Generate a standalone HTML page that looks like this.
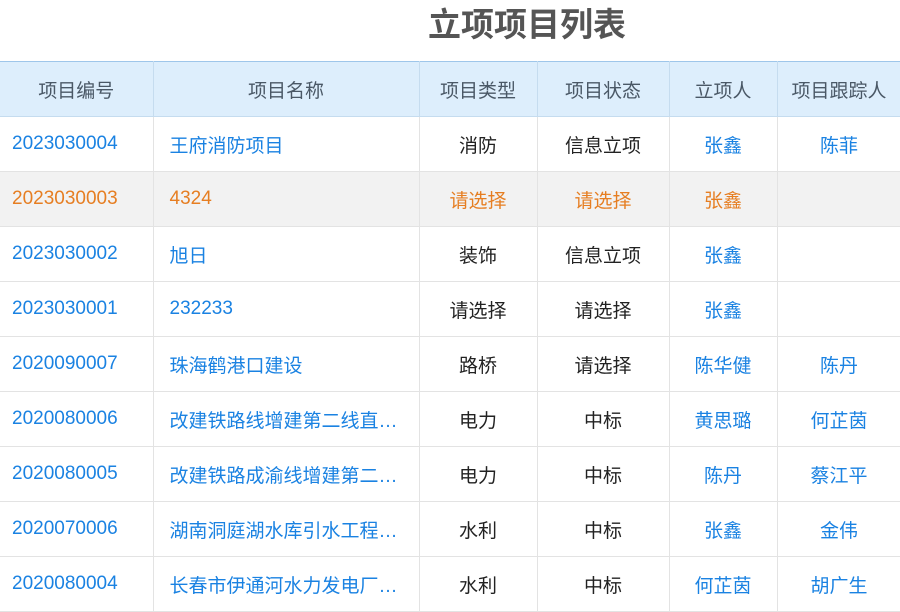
<!DOCTYPE html><html><head><meta charset="utf-8"><style>
body{margin:0;width:900px;height:600px;overflow:hidden;background:#fff;font-family:"Liberation Sans","Noto Sans CJK SC",sans-serif;}
h1{margin:0;height:61px;line-height:50px;text-align:center;font-size:33px;color:#555;font-weight:bold;padding-left:154px;box-sizing:border-box;}
table{border-collapse:collapse;table-layout:fixed;width:901px;font-size:19px;}
th,td{height:54px;border:1px solid #e3e3e3;text-align:center;white-space:nowrap;overflow:hidden;text-overflow:ellipsis;padding:0 6px;}
th{background:#ddeefc;color:#4a5866;font-weight:normal;border-color:#c5dcef;border-top:1px solid #9ec6ea;}
td{color:#222;}
td.l{text-align:left;padding-left:12px;}
td.l2{text-align:left;padding-left:16px;}
.b{color:#1a82e2;}
tr.o td{color:#e67e22;background:#f2f2f2;}
th:first-child,td:first-child{border-left:none;}
</style></head><body>
<h1>立项项目列表</h1>
<table>
<colgroup><col style="width:153px"><col style="width:266px"><col style="width:118px"><col style="width:132px"><col style="width:108px"><col style="width:124px"></colgroup>
<tr><th>项目编号</th><th>项目名称</th><th>项目类型</th><th>项目状态</th><th>立项人</th><th>项目跟踪人</th></tr>
<tr><td class="l b">2023030004</td><td class="l2 b">王府消防项目</td><td>消防</td><td>信息立项</td><td class="b">张鑫</td><td class="b">陈菲</td></tr>
<tr class="o"><td class="l">2023030003</td><td class="l2">4324</td><td>请选择</td><td>请选择</td><td>张鑫</td><td></td></tr>
<tr><td class="l b">2023030002</td><td class="l2 b">旭日</td><td>装饰</td><td>信息立项</td><td class="b">张鑫</td><td></td></tr>
<tr><td class="l b">2023030001</td><td class="l2 b">232233</td><td>请选择</td><td>请选择</td><td class="b">张鑫</td><td></td></tr>
<tr><td class="l b">2020090007</td><td class="l2 b">珠海鹤港口建设</td><td>路桥</td><td>请选择</td><td class="b">陈华健</td><td class="b">陈丹</td></tr>
<tr><td class="l b">2020080006</td><td class="l2 b">改建铁路线增建第二线直通线工程</td><td>电力</td><td>中标</td><td class="b">黄思璐</td><td class="b">何芷茵</td></tr>
<tr><td class="l b">2020080005</td><td class="l2 b">改建铁路成渝线增建第二线工程</td><td>电力</td><td>中标</td><td class="b">陈丹</td><td class="b">蔡江平</td></tr>
<tr><td class="l b">2020070006</td><td class="l2 b">湖南洞庭湖水库引水工程施工项目</td><td>水利</td><td>中标</td><td class="b">张鑫</td><td class="b">金伟</td></tr>
<tr><td class="l b">2020080004</td><td class="l2 b">长春市伊通河水力发电厂建设项目</td><td>水利</td><td>中标</td><td class="b">何芷茵</td><td class="b">胡广生</td></tr>
</table>
</body></html>
